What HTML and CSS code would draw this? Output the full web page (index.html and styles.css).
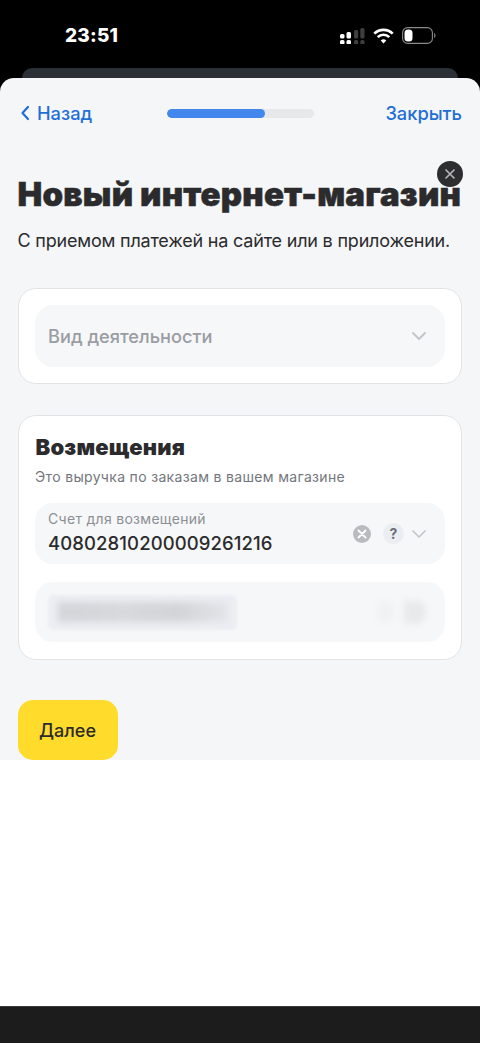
FILE: index.html
```html
<!DOCTYPE html>
<html lang="ru">
<head>
<meta charset="utf-8">
<title>Новый интернет-магазин</title>
<link rel="stylesheet" href="styles.css">
</head>
<body>
<div class="status">
  <span class="time">23:51</span>
  <div class="status-icons">
    <svg class="sig" width="25" height="16" viewBox="0 0 25 16">
      <g fill="#fff"><rect x="0" y="6" width="4.500" height="4.500" rx="1.500"/><rect x="0" y="12" width="4.500" height="4.500" rx="1.500"/><rect x="6.500" y="4" width="4.500" height="6.500" rx="1.500"/><rect x="6.500" y="12" width="4.500" height="4.500" rx="1.500"/></g>
      <g fill="#3e3e3e"><rect x="14" y="2" width="4.200" height="8.500" rx="1.500"/><rect x="14" y="12" width="4.200" height="4.500" rx="1.500"/><rect x="20.300" y="0" width="4.200" height="10.500" rx="1.500"/><rect x="20.300" y="12" width="4.200" height="4.500" rx="1.500"/></g>
    </svg>
    <svg class="wifi" width="21" height="16" viewBox="0 0 21 16">
      <g fill="none" stroke="#fff" stroke-width="2.600"><path d="M1.300 5.700a13 13 0 0 1 18.400 0"/><path d="M4.700 9.200a8.200 8.200 0 0 1 11.600 0"/></g>
      <path d="M7.700 12.500a4 4 0 0 1 5.600 0L10.500 15.500z" fill="#fff"/>
    </svg>
    <svg class="batt" width="34" height="17" viewBox="0 0 34 17">
      <rect x="0.600" y="0.600" width="29.800" height="15.800" rx="5" fill="none" stroke="#8a8a8a" stroke-width="1.100"/>
      <rect x="2.500" y="2.500" width="8" height="12" rx="3.500" fill="#fff"/>
      <path d="M32 6v5c1-.3 1.600-1.300 1.600-2.500S33 6.300 32 6z" fill="#6e6e6e"/>
    </svg>
  </div>
</div>
<div class="peek"></div>
<main class="sheet">
  <header class="nav">
    <a class="link back">
      <svg width="10" height="16" viewBox="0 0 10 16"><path d="M8 2 2.500 8 8 14" fill="none" stroke="#1f6fd6" stroke-width="2.200" stroke-linecap="round" stroke-linejoin="round"/></svg>
      Назад
    </a>
    <div class="progress"><div class="progress-fill" style="width:67%"></div></div>
    <a class="link">Закрыть</a>
  </header>
  <div class="title-wrap">
    <h1 class="title">Новый интернет-магазин</h1>
    <button class="dismiss" aria-label="Закрыть">
      <svg width="12" height="12" viewBox="0 0 12 12"><path d="M2 2l8 8M10 2l-8 8" stroke="#b4b6ba" stroke-width="1.700" stroke-linecap="round"/></svg>
    </button>
  </div>
  <p class="sub">С приемом платежей на сайте или в приложении.</p>

  <section class="card card-one">
    <div class="field field-plain">
      <span class="placeholder">Вид деятельности</span>
      <svg class="chev" width="16" height="10" viewBox="0 0 16 10"><path d="M2 2l6 6 6-6" fill="none" stroke="#c4c6ca" stroke-width="2" stroke-linecap="round" stroke-linejoin="round"/></svg>
    </div>
  </section>

  <section class="card card-two">
    <h2 class="card-title">Возмещения</h2>
    <p class="card-sub">Это выручка по заказам в вашем магазине</p>
    <div class="field field-value">
      <div class="field-text">
        <span class="label">Счет для возмещений</span>
        <span class="value">40802810200009261216</span>
      </div>
      <span class="clear">
        <svg width="10" height="10" viewBox="0 0 10 10"><path d="M1.500 1.500l7 7M8.500 1.500l-7 7" stroke="#fff" stroke-width="1.800" stroke-linecap="round"/></svg>
      </span>
      <span class="help">?</span>
      <svg class="chev chev-tight" width="16" height="10" viewBox="0 0 16 10"><path d="M2 2l6 6 6-6" fill="none" stroke="#c4c6ca" stroke-width="1.700" stroke-linecap="round" stroke-linejoin="round"/></svg>
    </div>
    <div class="field field-blur">
      <div class="blur-chip"><div class="blur-bar"></div></div>
      <div class="blur-icons"><span class="blur-dot"></span><span class="blur-arrow"></span></div>
    </div>
  </section>

  <button class="next">Далее</button>
</main>
<div class="blank"></div>
<div class="bottom"></div>
</body>
</html>
```

FILE: styles.css
```css
* { box-sizing: border-box; }
html, body { margin: 0; padding: 0; }
body {
  width: 480px;
  height: 1043px;
  overflow: hidden;
  background: #000;
  font-family: Inter, "Noto Sans", sans-serif;
  display: flex;
  flex-direction: column;
}
.status {
  height: 68px;
  flex: none;
  display: flex;
  justify-content: space-between;
  align-items: flex-start;
  padding: 24px 44px 0 65px;
}
.time {
  color: #fff;
  font-size: 19px;
  font-weight: 800;
  line-height: 23px;
  letter-spacing: 0.2px;
}
.status-icons { display: flex; align-items: center; gap: 8px; margin-top: 3px; }
.peek {
  flex: none;
  height: 10px;
  margin: 0 22px;
  background: #2b2f36;
  border-radius: 10px 10px 0 0;
}
.sheet {
  flex: none;
  height: 682px;
  background: #f5f6f8;
  border-radius: 14px 14px 0 0;
  padding: 0 18px 0 17.500px;
  display: flex;
  flex-direction: column;
  align-items: stretch;
}
.sheet > * { flex: none; }
.nav {
  height: 70px;
  display: flex;
  align-items: center;
  justify-content: space-between;
}
.link {
  color: #1f6fd6;
  font-size: 18.300px;
  font-weight: 500;
  display: flex;
  align-items: center;
  gap: 7px;
}
.back { margin-left: 2.500px; }
.progress {
  width: 147px;
  height: 9px;
  border-radius: 5px;
  background: #e6e8ea;
  overflow: hidden;
  margin-left: 3px;
}
.progress-fill { height: 100%; background: #4187ec; border-radius: 5px; }
.title-wrap { position: relative; margin-top: 26px; height: 40px; }
.title {
  margin: 0;
  font-size: 33px;
  font-weight: 900;
  line-height: 40px;
  color: #2b2b2d;
  white-space: nowrap;
  letter-spacing: 0.2px;
  -webkit-text-stroke: 0.5px #2b2b2d;
}
.dismiss {
  position: absolute;
  top: -13px;
  right: -1px;
  width: 26px;
  height: 26px;
  padding: 0;
  border: 0;
  border-radius: 50%;
  background: #2e2e30;
  display: flex;
  align-items: center;
  justify-content: center;
}
.sub {
  margin: 14px 0 0;
  font-size: 18px;
  line-height: 26px;
  color: #2b2b2d;
  white-space: nowrap;
  letter-spacing: -0.2px;
}
.card {
  background: #fff;
  border: 1px solid #e1e3e6;
  border-radius: 18px;
  padding: 16px;
}
.card-one { margin-top: 34px; height: 96px; }
.card-two { margin-top: 31px; height: 245px; padding-top: 17px; }
.field {
  background: #f6f7f8;
  border-radius: 18px;
  height: 62px;
  display: flex;
  align-items: center;
  padding: 0 18px 0 13.500px;
}
.field-plain { justify-content: space-between; }
.placeholder { font-size: 18.200px; font-weight: 500; color: #9a9da3; }
.card-title {
  margin: 0 0 0 1px;
  font-size: 22px;
  font-weight: 900;
  line-height: 28px;
  color: #2b2b2d;
  letter-spacing: 0.2px;
}
.card-sub {
  margin: 6px 0 0 0.500px;
  font-size: 14px;
  line-height: 20px;
  color: #73767c;
  letter-spacing: 0.33px;
}
.field-value { margin-top: 16px; height: 61px; }
.field-text { flex: 1; display: flex; flex-direction: column; margin-top: -1px; }
.label { font-size: 14px; line-height: 18px; color: #8c8f95; letter-spacing: 0.3px; }
.value { font-size: 18.500px; line-height: 26px; font-weight: 500; color: #2b2b2d; letter-spacing: 0.1px; margin-top: 2px; }
.clear {
  width: 18px;
  height: 18px;
  border-radius: 50%;
  background: #b9bbbf;
  display: flex;
  align-items: center;
  justify-content: center;
  margin-right: 12px;
}
.help {
  width: 21px;
  height: 21px;
  border-radius: 50%;
  background: #eaedf1;
  color: #6b6e75;
  font-size: 14px;
  font-weight: 700;
  display: flex;
  align-items: center;
  justify-content: center;
  margin-right: 7px;
}
.field-blur { margin-top: 18px; height: 60px; padding-right: 18px; justify-content: space-between; }
.blur-chip {
  width: 189px;
  height: 35px;
  background: #eceef4;
  border-radius: 5px;
  display: flex;
  align-items: center;
  padding-left: 10px;
  filter: blur(1px);
}
.blur-bar {
  width: 170px;
  height: 20px;
  background: linear-gradient(90deg, #d4d5d9, #d8d9dc 40%, #d3d4d7 70%, #e4e5e9);
  filter: blur(3px);
}
.blur-icons { display: flex; align-items: center; gap: 10px; filter: blur(3px); }
.blur-dot { width: 17px; height: 22px; background: #f0f1f2; border-radius: 50%; }
.blur-arrow { width: 23px; height: 23px; background: #e8e9eb; clip-path: polygon(0 0, 75% 0, 100% 50%, 75% 100%, 0 100%); }
.next {
  margin-top: 40px;
  width: 100px;
  height: 60px;
  border: 0;
  border-radius: 15px;
  background: #ffdb2b;
  color: #2b2b2d;
  font-family: inherit;
  font-size: 18px;
  font-weight: 500;
  padding: 0;
}
.blank { flex: none; height: 246px; background: #fff; }
.bottom { flex: 1; background: #1c1c1c; border-top: 1px solid #3a3a3a; }
```
